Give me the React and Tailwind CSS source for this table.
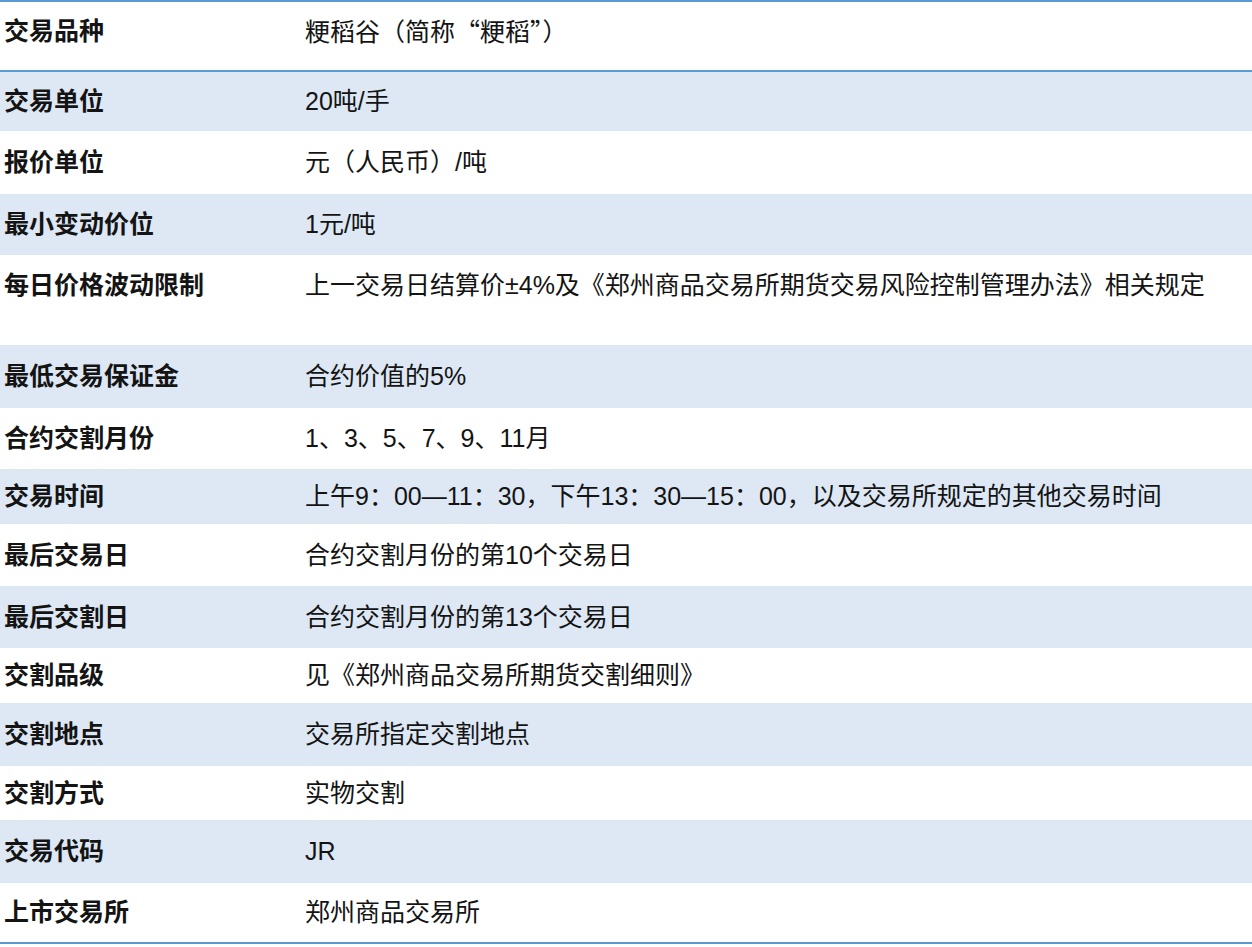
import React from "react";

const Q = ({ children }) => (
  <span style={{ fontFamily: '"Noto Sans CJK SC", sans-serif' }}>{children}</span>
);

const rows = [
  { label: "交易品种", value: <>粳稻谷（简称<Q>“</Q>粳稻<Q>”</Q>）</>, h: "h-[70px]", bg: "bg-white", extra: "pb-[10px] border-b-2 border-[#5b9bd5]" },
  { label: "交易单位", value: "20吨/手", h: "h-[59px]", bg: "bg-[#dde8f4]", extra: "" },
  { label: "报价单位", value: "元（人民币）/吨", h: "h-[63px]", bg: "bg-white", extra: "" },
  { label: "最小变动价位", value: "1元/吨", h: "h-[61px]", bg: "bg-[#dde8f4]", extra: "" },
  { label: "每日价格波动限制", value: "上一交易日结算价±4%及《郑州商品交易所期货交易风险控制管理办法》相关规定", h: "h-[90px]", bg: "bg-white", extra: "pb-[30px]" },
  { label: "最低交易保证金", value: "合约价值的5%", h: "h-[63px]", bg: "bg-[#dde8f4]", extra: "" },
  { label: "合约交割月份", value: "1、3、5、7、9、11月", h: "h-[61px]", bg: "bg-white", extra: "" },
  { label: "交易时间", value: "上午9：00—11：30，下午13：30—15：00，以及交易所规定的其他交易时间", h: "h-[55px]", bg: "bg-[#dde8f4]", extra: "" },
  { label: "最后交易日", value: "合约交割月份的第10个交易日", h: "h-[62px]", bg: "bg-white", extra: "" },
  { label: "最后交割日", value: "合约交割月份的第13个交易日", h: "h-[62px]", bg: "bg-[#dde8f4]", extra: "" },
  { label: "交割品级", value: "见《郑州商品交易所期货交割细则》", h: "h-[55px]", bg: "bg-white", extra: "" },
  { label: "交割地点", value: "交易所指定交割地点", h: "h-[63px]", bg: "bg-[#dde8f4]", extra: "" },
  { label: "交割方式", value: "实物交割", h: "h-[54px]", bg: "bg-white", extra: "" },
  { label: "交易代码", value: "JR", h: "h-[63px]", bg: "bg-[#dde8f4]", extra: "" },
  { label: "上市交易所", value: "郑州商品交易所", h: "h-[59px]", bg: "bg-white", extra: "" },
];

export default function App() {
  return (
    <div
      className="w-[1252px] h-[947px] bg-white text-[#141414]"
      style={{ fontFamily: '"Liberation Sans", "Noto Sans CJK SC", sans-serif' }}
    >
      <div className="border-t-2 border-b-2 border-[#5b9bd5]">
        {rows.map((r, i) => (
          <div key={i} className={`flex items-center ${r.h} ${r.bg} ${r.extra}`}>
            <div className="w-[305px] pl-[4px] text-[25px] font-bold leading-none whitespace-nowrap">
              {r.label}
            </div>
            <div className="flex-1 text-[25px] leading-none whitespace-nowrap">
              {r.value}
            </div>
          </div>
        ))}
      </div>
    </div>
  );
}
